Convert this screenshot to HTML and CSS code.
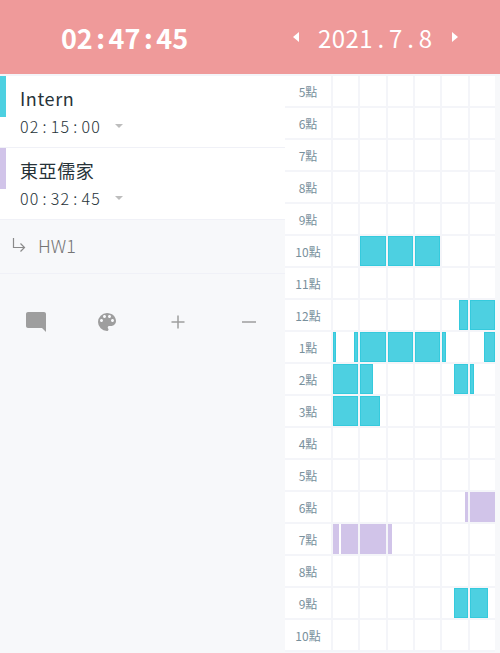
FILE: index.html
```html
<!DOCTYPE html>
<html lang="zh-Hant">
<head>
    <meta charset="UTF-8">
    <meta name="viewport" content="width=device-width, initial-scale=1.0">
    <title>Timer</title>
    <link rel="stylesheet" href="styles.css">
</head>
<body>

    <!-- Header -->
    <header class="top-bar">
        <div class="clock">02<span class="sep">:</span>47<span class="sep">:</span>45</div>
        <div class="date-nav">
            <span class="arrow arrow-left"></span>
            <span class="date">2021<span class="sep">.</span>7<span class="sep">.</span>8</span>
            <span class="arrow arrow-right"></span>
        </div>
    </header>

    <main class="content">
        <!-- Task list -->
        <section class="sidebar">
            <div class="task">
                <span class="task-color cyan"></span>
                <div class="task-name">Intern</div>
                <div class="task-time">02<span class="sep">:</span>15<span class="sep">:</span>00<span class="caret"></span></div>
            </div>
            <div class="task">
                <span class="task-color purple"></span>
                <div class="task-name">東亞儒家</div>
                <div class="task-time">00<span class="sep">:</span>32<span class="sep">:</span>45<span class="caret"></span></div>
            </div>
            <div class="subtask">
                <svg class="subtask-icon" viewBox="0 0 14 14" width="14" height="14"><path d="M1.500 0v9.500h11M8.500 5.500l4 4-4 4" fill="none" stroke="#8a8a8a" stroke-width="1.200"/></svg>
                <span>HW1</span>
            </div>
            <div class="tools">
                <svg viewBox="0 0 24 24" width="24" height="24"><path fill="#9e9e9e" d="M21.990 4c0-1.100-.890-2-1.990-2H4c-1.100 0-2 .900-2 2v12c0 1.100.900 2 2 2h14l4 4-.010-18z"/></svg>
                <svg viewBox="0 0 24 24" width="24" height="24"><path fill="#9e9e9e" d="M12 3a9 9 0 0 0 0 18c.830 0 1.500-.670 1.500-1.500 0-.390-.150-.740-.390-1.010-.230-.260-.380-.610-.380-.990 0-.830.670-1.500 1.500-1.500H16c2.760 0 5-2.240 5-5 0-4.420-4.030-8-9-8zm-5.500 9c-.830 0-1.500-.670-1.500-1.500S5.670 9 6.500 9 8 9.670 8 10.500 7.330 12 6.500 12zm3-4C8.670 8 8 7.330 8 6.500S8.670 5 9.500 5s1.500.670 1.500 1.500S10.330 8 9.500 8zm5 0c-.830 0-1.500-.670-1.500-1.500S13.670 5 14.500 5s1.500.670 1.500 1.500S15.330 8 14.500 8zm3 4c-.830 0-1.500-.670-1.500-1.500S16.670 9 17.500 9s1.500.670 1.500 1.500-.670 1.500-1.500 1.500z"/></svg>
                <svg viewBox="0 0 24 24" width="24" height="24"><path d="M12 5.500v13M5.500 12h13" stroke="#9e9e9e" stroke-width="1.500" fill="none"/></svg>
                <svg viewBox="0 0 24 24" width="24" height="24"><path d="M5 12h14" stroke="#9e9e9e" stroke-width="1.500" fill="none"/></svg>
            </div>
        </section>

        <!-- Day grid -->
        <section class="grid">
            <div class="row"><div class="hour">5點</div><div class="cell"></div><div class="cell"></div><div class="cell"></div><div class="cell"></div><div class="cell"></div><div class="cell"></div></div>
            <div class="row"><div class="hour">6點</div><div class="cell"></div><div class="cell"></div><div class="cell"></div><div class="cell"></div><div class="cell"></div><div class="cell"></div></div>
            <div class="row"><div class="hour">7點</div><div class="cell"></div><div class="cell"></div><div class="cell"></div><div class="cell"></div><div class="cell"></div><div class="cell"></div></div>
            <div class="row"><div class="hour">8點</div><div class="cell"></div><div class="cell"></div><div class="cell"></div><div class="cell"></div><div class="cell"></div><div class="cell"></div></div>
            <div class="row"><div class="hour">9點</div><div class="cell"></div><div class="cell"></div><div class="cell"></div><div class="cell"></div><div class="cell"></div><div class="cell"></div></div>
            <div class="row"><div class="hour">10點</div>
                <div class="cell"></div>
                <div class="cell"><i class="bar cyan" style="left:0;width:100%"></i></div>
                <div class="cell"><i class="bar cyan" style="left:0;width:100%"></i></div>
                <div class="cell"><i class="bar cyan" style="left:0;width:100%"></i></div>
                <div class="cell"></div><div class="cell"></div>
            </div>
            <div class="row"><div class="hour">11點</div><div class="cell"></div><div class="cell"></div><div class="cell"></div><div class="cell"></div><div class="cell"></div><div class="cell"></div></div>
            <div class="row"><div class="hour">12點</div>
                <div class="cell"></div><div class="cell"></div><div class="cell"></div><div class="cell"></div>
                <div class="cell"><i class="bar cyan" style="left:66%;width:34%"></i></div>
                <div class="cell"><i class="bar cyan" style="left:0;width:100%"></i></div>
            </div>
            <div class="row"><div class="hour">1點</div>
                <div class="cell"><i class="bar cyan" style="left:0;width:10%"></i><i class="bar cyan" style="left:84%;width:16%"></i></div>
                <div class="cell"><i class="bar cyan" style="left:0;width:100%"></i></div>
                <div class="cell"><i class="bar cyan" style="left:0;width:100%"></i></div>
                <div class="cell"><i class="bar cyan" style="left:0;width:100%"></i></div>
                <div class="cell"><i class="bar cyan" style="left:0;width:16%"></i></div>
                <div class="cell"><i class="bar cyan" style="left:58%;width:42%"></i></div>
            </div>
            <div class="row"><div class="hour">2點</div>
                <div class="cell"><i class="bar cyan" style="left:0;width:100%"></i></div>
                <div class="cell"><i class="bar cyan" style="left:0;width:52%"></i></div>
                <div class="cell"></div><div class="cell"></div>
                <div class="cell"><i class="bar cyan" style="left:48%;width:52%"></i></div>
                <div class="cell"><i class="bar cyan" style="left:0;width:17%"></i></div>
            </div>
            <div class="row"><div class="hour">3點</div>
                <div class="cell"><i class="bar cyan" style="left:0;width:100%"></i></div>
                <div class="cell"><i class="bar cyan" style="left:0;width:78%"></i></div>
                <div class="cell"></div><div class="cell"></div><div class="cell"></div><div class="cell"></div>
            </div>
            <div class="row"><div class="hour">4點</div><div class="cell"></div><div class="cell"></div><div class="cell"></div><div class="cell"></div><div class="cell"></div><div class="cell"></div></div>
            <div class="row"><div class="hour">5點</div><div class="cell"></div><div class="cell"></div><div class="cell"></div><div class="cell"></div><div class="cell"></div><div class="cell"></div></div>
            <div class="row"><div class="hour">6點</div>
                <div class="cell"></div><div class="cell"></div><div class="cell"></div><div class="cell"></div>
                <div class="cell"><i class="bar purple" style="left:88%;width:12%"></i></div>
                <div class="cell"><i class="bar purple" style="left:0;width:100%"></i></div>
            </div>
            <div class="row"><div class="hour">7點</div>
                <div class="cell"><i class="bar purple" style="left:0;width:22%"></i><i class="bar purple" style="left:32%;width:68%"></i></div>
                <div class="cell"><i class="bar purple" style="left:0;width:100%"></i></div>
                <div class="cell"><i class="bar purple" style="left:0;width:16%"></i></div>
                <div class="cell"></div><div class="cell"></div><div class="cell"></div>
            </div>
            <div class="row"><div class="hour">8點</div><div class="cell"></div><div class="cell"></div><div class="cell"></div><div class="cell"></div><div class="cell"></div><div class="cell"></div></div>
            <div class="row"><div class="hour">9點</div>
                <div class="cell"></div><div class="cell"></div><div class="cell"></div><div class="cell"></div>
                <div class="cell"><i class="bar cyan" style="left:48%;width:52%"></i></div>
                <div class="cell"><i class="bar cyan" style="left:0;width:72%"></i></div>
            </div>
            <div class="row"><div class="hour">10點</div><div class="cell"></div><div class="cell"></div><div class="cell"></div><div class="cell"></div><div class="cell"></div><div class="cell"></div></div>
        </section>
    </main>

</body>
</html>
```

FILE: styles.css
```css
html, body {
    height: 100%;
}
body {
    margin: 0;
    overflow: hidden;
    background-color: #f7f8fa;
    font-family: "Noto Sans CJK TC", "Noto Sans", sans-serif;
    color: #263238;
}

/* Header */
.top-bar {
    display: flex;
    height: 74px;
    background-color: #ef9a9a;
    color: white;
    border-bottom: 2px solid #f4f5f9;
}
.clock {
    width: 249px;
    line-height: 76px;
    text-align: center;
    font-size: 27px;
    font-weight: 700;
}
.clock .sep {
    margin: 0 3.5px;
}
.date-nav {
    flex: 1;
    display: flex;
    align-items: center;
    padding-left: 44px;
}
.date {
    margin: 0 19px;
    font-size: 24px;
    font-weight: 400;
    letter-spacing: 0.4px;
}
.date .sep {
    margin: 0 4.5px;
}
.arrow {
    width: 0;
    height: 0;
    border-top: 5px solid transparent;
    border-bottom: 5px solid transparent;
}
.arrow-left {
    border-right: 6px solid white;
}
.arrow-right {
    border-left: 6px solid white;
}

.content {
    display: flex;
}

/* Sidebar */
.sidebar {
    width: 285px;
    flex-shrink: 0;
}
.task {
    position: relative;
    height: 71px;
    padding-left: 20px;
    background-color: white;
    border-bottom: 1px solid #f0f1f7;
}
.task-color {
    position: absolute;
    left: 0;
    top: 0;
    width: 6px;
    height: 41px;
}
.task-name {
    padding-top: 8px;
    font-size: 18px;
    line-height: 29px;
    letter-spacing: 0.6px;
}
.task-time {
    display: flex;
    align-items: center;
    font-size: 16px;
    font-weight: 300;
    line-height: 26px;
    letter-spacing: 1.2px;
}
.task-time .sep {
    margin: 0 3px;
}
.caret {
    margin-left: 14px;
    border-top: 4px solid #bdbdbd;
    border-left: 4px solid transparent;
    border-right: 4px solid transparent;
}
.subtask {
    display: flex;
    align-items: center;
    gap: 12px;
    height: 50px;
    padding: 0 0 3px 12px;
    border-bottom: 1px solid #f0f1f7;
    font-size: 18px;
    font-weight: 300;
    color: #757575;
}
.tools {
    display: grid;
    grid-template-columns: repeat(4, 1fr);
    justify-items: center;
    padding-top: 36px;
}

/* Grid */
.grid {
    flex: 1;
    padding-right: 5px;
}
.row {
    display: flex;
    height: 32px;
    box-sizing: border-box;
    border-bottom: 2px solid #f4f5f9;
    background-color: white;
}
.hour {
    width: 46px;
    flex-shrink: 0;
    line-height: 31px;
    text-align: center;
    font-size: 12px;
    color: #78909c;
}
.cell {
    position: relative;
    flex: 1;
    border-left: 2px solid #f4f5f9;
}
.bar {
    position: absolute;
    top: 0;
    bottom: 0;
    box-sizing: border-box;
    border: 1px solid rgba(0, 188, 212, 0.3);
}
.cyan {
    background-color: #4dd0e1;
}
.purple {
    background-color: #d1c4e9;
}
.bar.purple {
    border-color: rgba(209, 196, 233, 0.6);
}
```
